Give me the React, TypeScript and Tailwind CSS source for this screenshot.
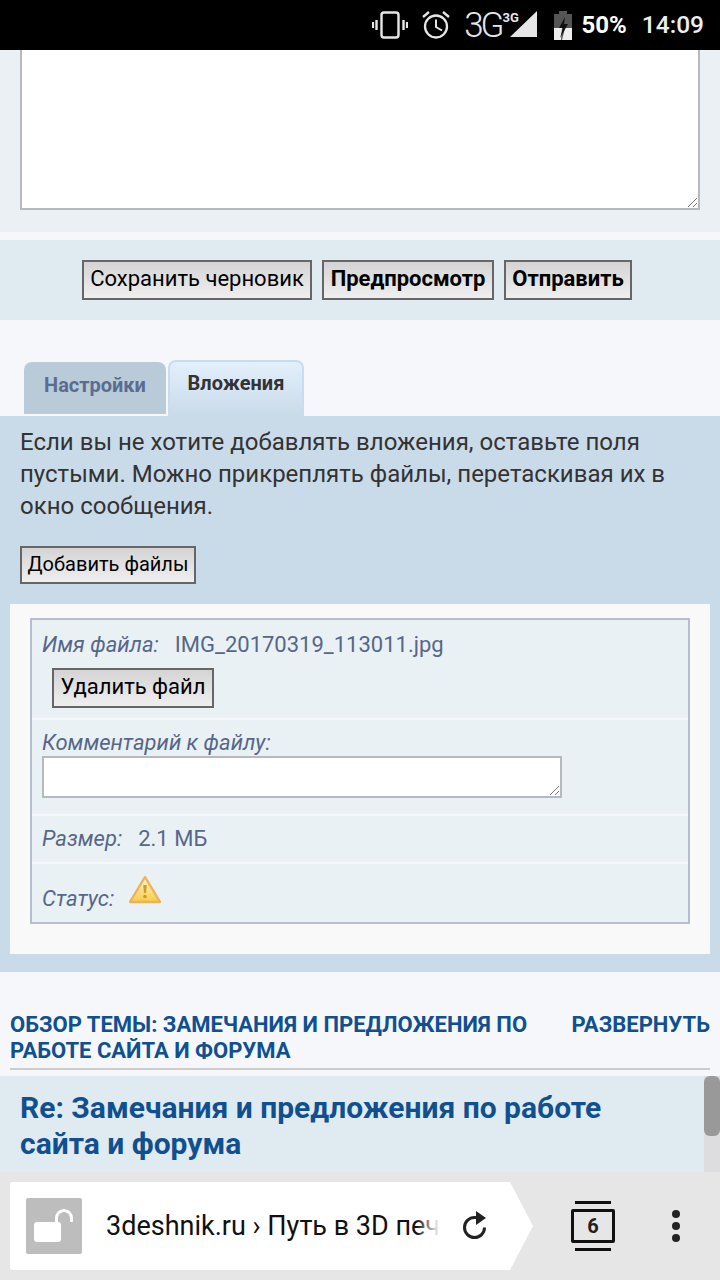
import React from "react";

const font = "font-['Roboto','Liberation_Sans',sans-serif]";
const btn =
  "border-2 border-[#666] bg-gradient-to-b from-[#d4d4d4] to-[#efefef] leading-none text-black flex items-center justify-center whitespace-nowrap pb-[3px]";
const label = "italic text-[#56678a] text-[22px] leading-[26px]";
const value = "text-[#56678a] text-[22px] leading-[26px]";

const StatusBar = () => (
  <div className="h-[50px] bg-black flex items-center justify-end shrink-0 text-[24.5px] font-medium text-[#eeeeee]">
    <svg width="36" height="32" viewBox="0 0 36 32" fill="none">
      <rect x="9.5" y="3.5" width="17" height="25" rx="2.5" stroke="#e6e6e6" strokeWidth="2.4" />
      <path d="M4.5 11v10M31.5 11v10" stroke="#e6e6e6" strokeWidth="2.4" />
      <path d="M1 13v6M35 13v6" stroke="#e6e6e6" strokeWidth="2.2" />
    </svg>
    <svg width="30" height="30" viewBox="0 0 30 30" fill="none" className="ml-[13px]">
      <circle cx="15" cy="16.5" r="11" stroke="#e6e6e6" strokeWidth="2.3" />
      <path d="M15 9.5v7.5l6 3.5" stroke="#e6e6e6" strokeWidth="2" />
      <path d="M2 7l6-5M28 7l-6-5" stroke="#e6e6e6" strokeWidth="2.3" />
    </svg>
    <span className="ml-[13px] text-[35px] font-light leading-none tracking-[-3px] text-[#e6e6e6]">3G</span>
    <div className="relative w-[36px] h-[30px]">
      <span className="absolute left-[1px] top-[1px] text-[13px] font-bold leading-none text-[#e6e6e6]">3G</span>
      <svg width="30" height="30" viewBox="0 0 30 30" className="absolute left-[6px] top-0">
        <path d="M29 1v26H2z" fill="#e6e6e6" />
      </svg>
    </div>
    <svg width="20" height="32" viewBox="0 0 20 32" className="ml-[15px]">
      <path d="M6 2h8v3h5v26H1V5h5z" fill="#555" />
      <path d="M1 19h8l-1 12H1zM12 19h7v12H9z" fill="#efefef" />
      <path d="M12 8l-6 11h4l-3 10 8-14h-4z" fill="#111" />
    </svg>
    <span className="ml-[9px] font-bold text-[24px] leading-none text-white">50%</span>
    <span className="ml-[15px] mr-[16px] leading-none">14:09</span>
  </div>
);

const Tabs = () => (
  <div className="flex h-[56px] pl-[24px] items-start shrink-0">
    <div className="w-[142px] h-[52px] mt-[2px] rounded-t-[8px] bg-[#b9cbd9] flex items-center justify-center pb-[6px] text-[20px] font-bold text-[#5a6d8f]">
      Настройки
    </div>
    <div className="ml-[2px] w-[136px] h-[56px] rounded-t-[8px] border-2 border-b-0 border-[#c9dcee] bg-gradient-to-b from-[#e2f0fc] to-[#c9dae9] flex items-center justify-center pb-[12px] text-[20px] font-bold text-[#333333]">
      Вложения
    </div>
  </div>
);

const Grip = () => (
  <svg width="11" height="11" viewBox="0 0 11 11" className="absolute right-0 bottom-0">
    <path d="M1 10L10 1M6 10l4-4" stroke="#777" strokeWidth="1" />
  </svg>
);

const FileBox = () => (
  <div className="mx-[10px] h-[350px] bg-[#f9f9f9] pt-[14px] px-[20px]">
    <div className="h-[306px] border-2 border-[#b8bccf] bg-[#eaf1f5] flex flex-col">
      <div className="h-[100px] pl-[10px] pt-[11px] border-b-2 border-[#f6f9fb]">
        <div className="flex items-center h-[28px]">
          <span className={label}>Имя файла:</span>
          <span className={`${value} ml-[16px]`}>IMG_20170319_113011.jpg</span>
        </div>
        <div className={`${btn} h-[40px] text-[22px] w-[162px] ml-[10px] mt-[9px]`}>Удалить файл</div>
      </div>
      <div className="h-[96px] pl-[10px] pt-[10px] border-b-2 border-[#f6f9fb]">
        <div className={label}>Комментарий к файлу:</div>
        <div className="w-[520px] h-[42px] bg-white border-2 border-[#b4bac0] relative">
          <Grip />
        </div>
      </div>
      <div className="h-[48px] pl-[10px] flex items-center border-b-2 border-[#f6f9fb]">
        <span className={label}>Размер:</span>
        <span className={`${value} ml-[16px]`}>2.1 МБ</span>
      </div>
      <div className="flex-1 pl-[10px] flex items-start pt-[11px]">
        <span className={`${label} mt-[11px]`}>Статус:</span>
        <svg width="32" height="29" viewBox="0 0 32 29" className="ml-[15px]">
          <defs>
            <linearGradient id="warn" x1="0" y1="0" x2="0" y2="1">
              <stop offset="0" stopColor="#fff6cf" />
              <stop offset="1" stopColor="#f6cc4a" />
            </linearGradient>
          </defs>
          <path d="M16 2L31 27H1z" fill="url(#warn)" stroke="#eeb35a" strokeWidth="2.4" strokeLinejoin="round" />
          <path d="M14.2 10h3.6l-.8 8h-2z" fill="#d09a2c" />
          <circle cx="16" cy="21.5" r="1.8" fill="#d09a2c" />
        </svg>
      </div>
    </div>
  </div>
);

const BottomBar = () => (
  <div className="h-[108px] bg-[#e6e6e6] flex items-center pl-[10px] shrink-0">
    <div className="w-[523px] h-[88px] bg-white rounded-[3px] [clip-path:polygon(0_0,500px_0,523px_50%,500px_100%,0_100%)] flex items-center pl-[16px] shrink-0">
      <svg width="56" height="56" viewBox="0 0 56 56" fill="none" className="shrink-0">
        <rect width="56" height="56" rx="2" fill="#bdbdbd" />
        <rect x="8" y="24" width="27" height="20" rx="3" fill="#fff" />
        <path d="M30.5 24v-4a7.5 7.5 0 0 1 15 0v4" stroke="#fff" strokeWidth="3" />
      </svg>
      <div className="relative w-[334px] ml-[24px] overflow-hidden whitespace-nowrap text-[27px] leading-[32px] text-[#111]">
        3deshnik.ru › Путь в 3D печ
        <div className="absolute right-0 top-0 w-[24px] h-full bg-gradient-to-r from-transparent to-white" />
      </div>
      <svg width="26" height="30" viewBox="0 0 26 30" fill="none" className="ml-[23px] shrink-0">
        <path d="M21.5 16.5A10 10 0 1 1 11.5 6.5h2" stroke="#222" strokeWidth="3" />
        <path d="M13 0l10 7-10 7z" fill="#222" />
      </svg>
    </div>
    <div className="ml-[38px] w-[44px] flex flex-col items-center gap-[5px] shrink-0">
      <div className="w-[36px] h-[3px] bg-[#111]" />
      <div className="w-[44px] h-[34px] border-[3px] border-[#111] rounded-[2px] flex items-center justify-center text-[20px] font-bold leading-none text-[#222]">
        6
      </div>
      <div className="w-[36px] h-[3px] bg-[#111]" />
    </div>
    <div className="ml-[57px] flex flex-col gap-[4px] shrink-0">
      <div className="w-[8px] h-[8px] rounded-full bg-[#222]" />
      <div className="w-[8px] h-[8px] rounded-full bg-[#222]" />
      <div className="w-[8px] h-[8px] rounded-full bg-[#222]" />
    </div>
  </div>
);

export default function App() {
  return (
    <div className={`${font} w-[720px] h-[1280px] overflow-hidden bg-[#f5f7fb] flex flex-col`}>
      <StatusBar />

      <div className="h-[182px] bg-[#eaf0f4] px-[20px] shrink-0">
        <div className="h-[160px] bg-white border-2 border-t-0 border-[#b4bac0] relative">
          <Grip />
        </div>
      </div>

      <div className="mt-[8px] h-[80px] bg-[#e0eaf1] flex items-center justify-center gap-[10px] pr-[6px] shrink-0">
        <div className={`${btn} h-[40px] text-[22px] w-[230px]`}>Сохранить черновик</div>
        <div className={`${btn} h-[40px] text-[22px] w-[172px] font-bold`}>Предпросмотр</div>
        <div className={`${btn} h-[40px] text-[22px] w-[128px] font-bold`}>Отправить</div>
      </div>

      <div className="h-[40px] shrink-0" />
      <Tabs />

      <div className="h-[556px] bg-[#c9dae9] shrink-0">
        <div className="px-[20px] pt-[10px] text-[24px] leading-[32px] text-[#333333]">
          Если вы не хотите добавлять вложения, оставьте поля пустыми. Можно прикреплять файлы, перетаскивая их в окно сообщения.
        </div>
        <div className={`${btn} h-[38px] text-[20px] w-[176px] ml-[20px] mt-[24px]`}>Добавить файлы</div>
        <div className="h-[20px]" />
        <FileBox />
      </div>

      <div className="h-[104px] px-[10px] pt-[40px] shrink-0">
        <div className="h-[58px] border-b-2 border-[#cccccc] flex justify-between text-[22px] leading-[26px] font-bold text-[#10508f]">
          <div className="w-[540px]">ОБЗОР ТЕМЫ: ЗАМЕЧАНИЯ И ПРЕДЛОЖЕНИЯ ПО РАБОТЕ САЙТА И ФОРУМА</div>
          <div>РАЗВЕРНУТЬ</div>
        </div>
      </div>

      <div className="h-[96px] flex shrink-0">
        <div className="w-[704px] bg-[#e0eaf1] pl-[20px] pr-[60px] pt-[14px] text-[30px] leading-[36px] font-bold text-[#10508f]">
          Re: Замечания и предложения по работе сайта и форума
        </div>
        <div className="w-[16px] bg-[#dddddf]">
          <div className="h-[60px] bg-[#999999] rounded-[6px]" />
        </div>
      </div>

      <BottomBar />
    </div>
  );
}
